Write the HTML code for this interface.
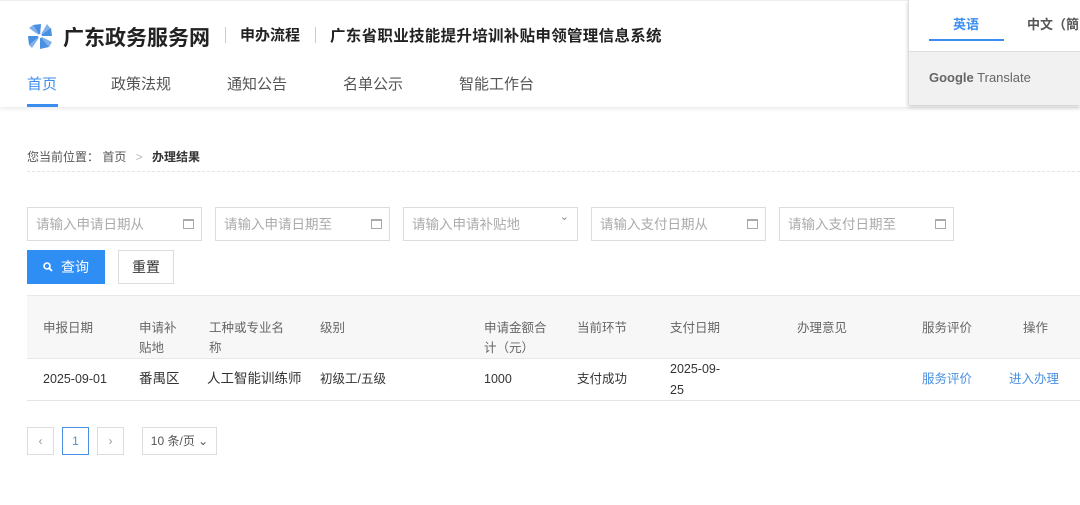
<!DOCTYPE html>
<html><head><meta charset="utf-8"><style>
*{margin:0;padding:0;box-sizing:border-box}
body{width:1080px;height:505px;overflow:hidden;background:#fff;font-family:"Liberation Sans","Noto Sans CJK SC",sans-serif;color:#333;position:relative}
.a{position:absolute;white-space:nowrap}
.hdr{position:absolute;left:0;top:0;width:1080px;height:107px;background:#fff;box-shadow:0 2px 4px rgba(0,0,0,.08);border-top:1px solid #eee}
.nav{font-size:15px;color:#555;top:73px}
.inp{position:absolute;top:207px;height:34px;width:175px;border:1px solid #ddd;font-size:13.5px;color:#aaa;padding:5px 0 0 8px}
.cal{position:absolute;right:7px;top:11px;width:11px;height:10px;border:1px solid #aaa;border-top-width:2px}
.th{font-size:12.5px;color:#666;line-height:20px}
.td{font-size:12.5px;color:#333;line-height:20px}
.pg{position:absolute;top:427px;height:28px;border:1px solid #ddd;font-size:12px;color:#999;text-align:center;line-height:26px}
</style></head><body>
<div class="hdr"></div>
<svg class="a" style="left:27px;top:23px" width="26" height="27" viewBox="0 0 26 27"><g fill="#4a90e2"><path d="M13 13 L6 2 L14 1 Z"/><path d="M13 13 L24 5 L25 13 Z"/><path d="M13 13 L22 24 L13 26 Z"/><path d="M13 13 L2 22 L1 13 Z"/><path d="M13 13 L20 1 L24 6 Z" opacity=".7"/><path d="M13 13 L2 5 L6 2 Z" opacity=".7"/><path d="M13 13 L25 19 L22 24Z" opacity=".7"/><path d="M13 13 L5 25 L2 22Z" opacity=".7"/></g><circle cx="13" cy="13" r="2" fill="#fff"/></svg>
<div class="a" style="left:63px;top:22px;font-size:21px;font-weight:bold;color:#222">广东政务服务网</div>
<div class="a" style="left:225px;top:27px;width:1px;height:16px;background:#ccc"></div>
<div class="a" style="left:240px;top:24px;font-size:15px;font-weight:bold;color:#222">申办流程</div>
<div class="a" style="left:315px;top:27px;width:1px;height:16px;background:#ccc"></div>
<div class="a" style="left:330px;top:24px;font-size:15.5px;letter-spacing:.3px;font-weight:bold;color:#222">广东省职业技能提升培训补贴申领管理信息系统</div>
<div class="a nav" style="left:27px;color:#3b8ef0">首页</div>
<div class="a" style="left:27px;top:104px;width:31px;height:3px;background:#3b8ef0"></div>
<div class="a nav" style="left:111px">政策法规</div>
<div class="a nav" style="left:227px">通知公告</div>
<div class="a nav" style="left:343px">名单公示</div>
<div class="a nav" style="left:459px">智能工作台</div>
<div class="a" style="left:908px;top:0;width:172px;height:105px;background:#f1f1f1;border-left:1px solid #ddd;box-shadow:0 2px 4px rgba(0,0,0,.2)">
<div style="position:absolute;left:0;top:0;width:172px;height:52px;background:#fff;border-bottom:1px solid #ddd"></div>
<div class="a" style="left:44px;top:14px;font-size:13px;font-weight:bold;color:#3b8ef0">英语</div>
<div class="a" style="left:20px;top:39px;width:75px;height:2px;background:#3b8ef0"></div>
<div class="a" style="left:118px;top:14px;font-size:13px;font-weight:bold;color:#555">中文（簡</div>
<div class="a" style="left:20px;top:70px;font-size:13px;color:#666"><span style="font-weight:bold">Google</span> Translate</div>
</div>
<div class="a" style="left:27px;top:148px;font-size:12px;color:#555">您当前位置： 首页 <span style="color:#bbb;margin:0 6px">&gt;</span> <b style="color:#333">办理结果</b></div>
<div class="a" style="left:27px;top:171px;width:1053px;border-top:1px dashed #e4e4e4"></div>
<div class="inp" style="left:27px">请输入申请日期从<span class="cal"></span></div>
<div class="inp" style="left:215px">请输入申请日期至<span class="cal"></span></div>
<div class="inp" style="left:403px">请输入申请补贴地<span class="a" style="right:8px;top:2px;color:#888;font-size:11px">⌄</span></div>
<div class="inp" style="left:591px">请输入支付日期从<span class="cal"></span></div>
<div class="inp" style="left:779px">请输入支付日期至<span class="cal"></span></div>
<div class="a" style="left:27px;top:250px;width:78px;height:34px;background:#2f8ef4;color:#fff;font-size:14px;line-height:34px;padding-left:16px"><svg width="10" height="10" viewBox="0 0 10 10" style="margin-right:8px"><circle cx="4" cy="4" r="3" fill="none" stroke="#fff" stroke-width="1.6"/><path d="M6 6 L9 9" stroke="#fff" stroke-width="1.8"/></svg>查询</div>
<div class="a" style="left:118px;top:250px;width:56px;height:34px;border:1px solid #ddd;font-size:14px;line-height:32px;text-align:center">重置</div>
<div class="a" style="left:27px;top:295px;width:1053px;height:64px;background:#f7f7f7;border-top:1px solid #e8e8e8;border-bottom:1px solid #e8e8e8"></div>
<div class="a th" style="left:43px;top:318px">申报日期</div>
<div class="a th" style="left:139px;top:318px">申请补<br>贴地</div>
<div class="a th" style="left:209px;top:318px">工种或专业名<br>称</div>
<div class="a th" style="left:320px;top:318px">级别</div>
<div class="a th" style="left:484px;top:318px">申请金额合<br>计（元）</div>
<div class="a th" style="left:577px;top:318px">当前环节</div>
<div class="a th" style="left:670px;top:318px">支付日期</div>
<div class="a th" style="left:797px;top:318px">办理意见</div>
<div class="a th" style="left:922px;top:318px">服务评价</div>
<div class="a th" style="left:1023px;top:318px">操作</div>
<div class="a td" style="left:43px;top:369px">2025-09-01</div>
<div class="a td" style="left:139px;top:369px;font-size:13.5px">番禺区</div>
<div class="a td" style="left:207px;top:369px;font-size:13.5px">人工智能训练师</div>
<div class="a td" style="left:320px;top:369px">初级工/五级</div>
<div class="a td" style="left:484px;top:369px">1000</div>
<div class="a td" style="left:577px;top:369px">支付成功</div>
<div class="a td" style="left:670px;top:359px;line-height:21px">2025-09-<br>25</div>
<div class="a td" style="left:922px;top:369px;color:#4a90e2">服务评价</div>
<div class="a td" style="left:1009px;top:369px;color:#4a90e2">进入办理</div>
<div class="a" style="left:27px;top:400px;width:1053px;border-top:1px solid #e4e4e4"></div>
<div class="pg" style="left:27px;width:27px">‹</div>
<div class="pg" style="left:62px;width:27px;border-color:#4a90e2;color:#4a90e2">1</div>
<div class="pg" style="left:97px;width:27px">›</div>
<div class="pg" style="left:142px;width:75px;color:#555">10 条/页 ⌄</div>
</body></html>
